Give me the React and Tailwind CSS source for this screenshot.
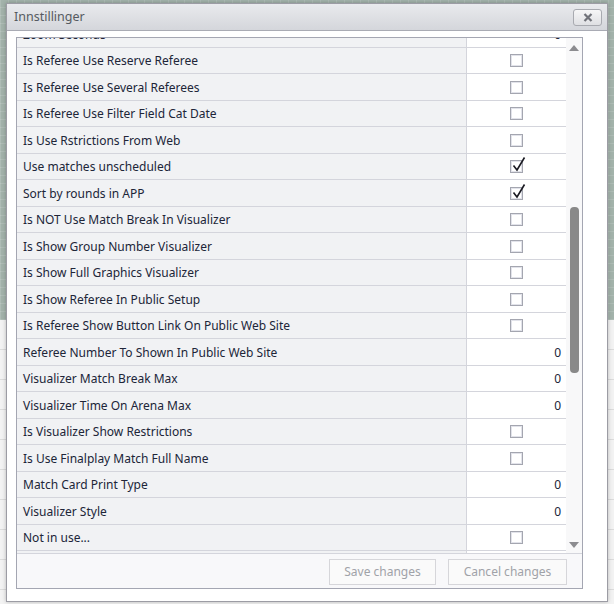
import React from "react";

const rows = [
  { label: "Zoom Seconds", type: "num" },
  { label: "Is Referee Use Reserve Referee", type: "cb" },
  { label: "Is Referee Use Several Referees", type: "cb" },
  { label: "Is Referee Use Filter Field Cat Date", type: "cb" },
  { label: "Is Use Rstrictions From Web", type: "cb" },
  { label: "Use matches unscheduled", type: "cb", checked: true },
  { label: "Sort by rounds in APP", type: "cb", checked: true },
  { label: "Is NOT Use Match Break In Visualizer", type: "cb" },
  { label: "Is Show Group Number Visualizer", type: "cb" },
  { label: "Is Show Full Graphics Visualizer", type: "cb" },
  { label: "Is Show Referee In Public Setup", type: "cb" },
  { label: "Is Referee Show Button Link On Public Web Site", type: "cb" },
  { label: "Referee Number To Shown In Public Web Site", type: "num" },
  { label: "Visualizer Match Break Max", type: "num" },
  { label: "Visualizer Time On Arena Max", type: "num" },
  { label: "Is Visualizer Show Restrictions", type: "cb" },
  { label: "Is Use Finalplay Match Full Name", type: "cb" },
  { label: "Match Card Print Type", type: "num" },
  { label: "Visualizer Style", type: "num" },
  { label: "Not in use...", type: "cb" },
  { label: "", type: "none" },
];

function Checkbox({ checked }) {
  return (
    <div className="relative w-[13px] h-[13px] border border-[#a4a6b0] bg-white">
      <div className="absolute inset-0 border border-[#e2e3ea]" />
      {checked && (
        <svg
          className="absolute left-[1px] top-[-5px]"
          width="14"
          height="16"
          viewBox="0 0 14 16"
        >
          <path
            d="M1.5 9.5 L5 14 L12.5 1.5"
            fill="none"
            stroke="#1a1a22"
            strokeWidth="1.6"
          />
        </svg>
      )}
    </div>
  );
}

export default function App() {
  const font = { fontFamily: '"Noto Sans", "DejaVu Sans", sans-serif' };
  return (
    <div className="relative w-[614px] h-[604px] overflow-hidden bg-[#f4f4f4]" style={font}>
      {/* background page */}
      <div className="flex flex-col w-full h-full">
        <div className="h-[320px] bg-[#a3b3ab] bg-[linear-gradient(90deg,rgba(255,255,255,0.12)_1px,transparent_1px),linear-gradient(0deg,rgba(255,255,255,0.12)_1px,transparent_1px)] bg-[size:8px_8px]" />
        <div className="flex-1 bg-[#f3f3f3] bg-[linear-gradient(0deg,#dcdcdc_1px,transparent_1px)] bg-[size:100%_30px]" />
      </div>

      {/* dialog */}
      <div className="absolute left-[6px] top-[3px] w-[602px] h-[599px] border border-[#9c9ca4] bg-white flex flex-col shadow-[0_0_4px_rgba(0,0,0,0.25)]">
        <div className="h-[27px] shrink-0 flex items-center justify-between pl-[7px] pr-[5px] bg-[linear-gradient(#e9eaed,#d4d6db)] border-b border-[#a9abb4]">
          <span className="text-[12.5px] text-[#555a60]">Innstillinger</span>
          <button className="w-[29px] h-[17px] rounded-[3px] border border-[#a8aab0] bg-[linear-gradient(#f6f6f7,#dfe0e3)] flex items-center justify-center">
            <svg width="10" height="9" viewBox="0 0 10 9">
              <path d="M1.5 1 L8.5 8 M8.5 1 L1.5 8" stroke="#707279" strokeWidth="2.2" />
            </svg>
          </button>
        </div>

        <div className="pt-[6px] pl-[9px] pr-[24px]">
          <div className="h-[552px] border border-[#a4a6b2] flex flex-col">
            <div className="flex-1 min-h-0 flex overflow-hidden">
              <div className="flex-1 overflow-hidden">
                <div className="-mt-[17px]">
                  {rows.map((r, i) => (
                    <div key={i} className="flex h-[26.5px] border-b border-[#d4d5dc]">
                      <div className="w-[450px] shrink-0 bg-[#f1f2f4] border-r border-[#d4d5dc] flex items-center pl-[6px] pt-[2px] text-[12px] text-[#202538] whitespace-nowrap">
                        {r.label}
                      </div>
                      <div className="flex-1 bg-white flex items-center justify-end pr-[5px] pt-[2px] text-[12px] text-[#202538]">
                        {r.type === "num" && <span>0</span>}
                        {r.type === "cb" && (
                          <div className="w-full flex justify-center pl-[5px] -mt-[1px]">
                            <Checkbox checked={r.checked} />
                          </div>
                        )}
                      </div>
                    </div>
                  ))}
                </div>
              </div>
              {/* scrollbar */}
              <div className="w-[16px] shrink-0 bg-[#f8f8f9] flex flex-col items-center">
                <svg className="mt-[7px]" width="10" height="6" viewBox="0 0 10 6">
                  <path d="M0 6 L5 0 L10 6 Z" fill="#8c8c90" />
                </svg>
                <div className="mt-[156px] w-[9px] h-[166px] rounded-[4px] bg-[#898989]" />
                <div className="flex-1" />
                <svg className="mb-[5px]" width="10" height="6" viewBox="0 0 10 6">
                  <path d="M0 0 L10 0 L5 6 Z" fill="#8c8c90" />
                </svg>
              </div>
            </div>
            <div className="h-[35px] shrink-0 border-t border-[#d4d5dc] bg-[#f8f8fa] flex items-center justify-end gap-[12px] pr-[15px] pt-[2px]">
              <button className="w-[107px] h-[26px] border border-[#d6d6da] bg-[#fafafa] text-[12px] text-[#a0a2a8]">
                Save changes
              </button>
              <button className="w-[119px] h-[26px] border border-[#d6d6da] bg-[#fafafa] text-[12px] text-[#a0a2a8]">
                Cancel changes
              </button>
            </div>
          </div>
        </div>
      </div>
    </div>
  );
}
